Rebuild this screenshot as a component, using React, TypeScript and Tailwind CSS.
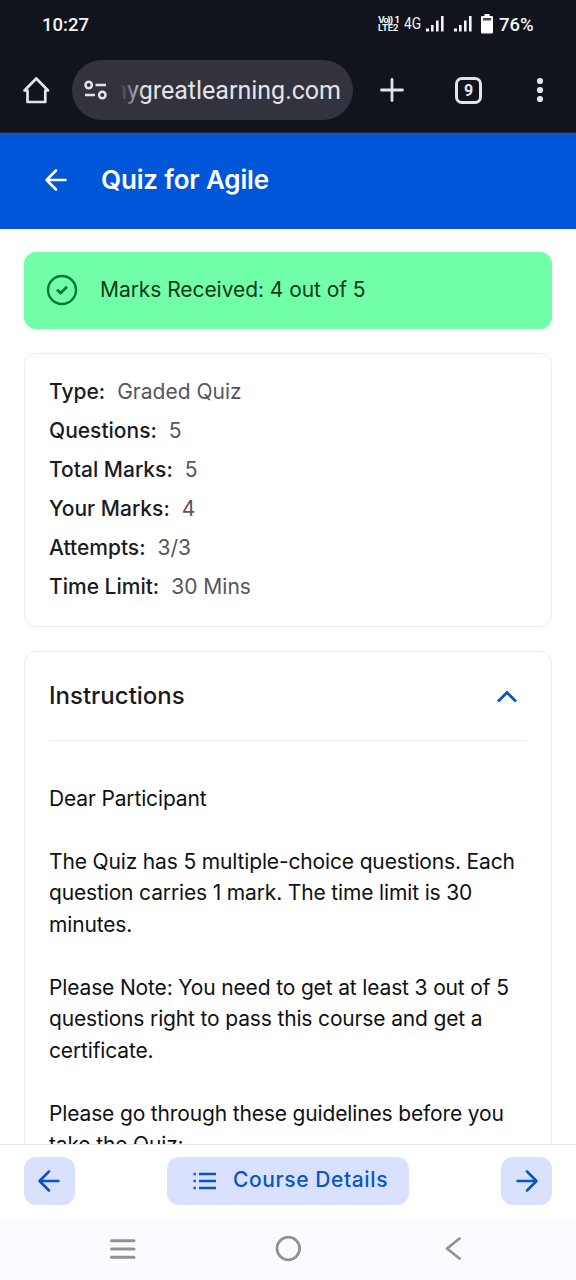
import type { ReactNode } from "react";

const details = [
  { label: "Type:", value: "Graded Quiz" },
  { label: "Questions:", value: "5" },
  { label: "Total Marks:", value: "5" },
  { label: "Your Marks:", value: "4" },
  { label: "Attempts:", value: "3/3" },
  { label: "Time Limit:", value: "30 Mins" },
];

function Signal() {
  return (
    <svg width="18" height="16" viewBox="0 0 18 16" fill="#f4f4f6">
      <rect x="0" y="12.5" width="3" height="3" />
      <rect x="5" y="9" width="2.6" height="6.5" />
      <rect x="10" y="4.5" width="2.6" height="11" />
      <rect x="15" y="0" width="2.6" height="15.5" />
    </svg>
  );
}

function StatusBar() {
  return (
    <div className="flex h-12 items-center pl-[42px] font-[Roboto] font-medium text-[#f4f4f6]">
      <span className="w-[336px] pt-0.5 text-[18.500px] leading-6">10:27</span>
      <div className="w-[26px] font-[Inter] text-[9px] leading-[8.500px] font-bold">
        <div className="flex w-5 justify-between tracking-[-1px]">
          <span>Vo))</span>
          <span>1</span>
        </div>
        <div className="tracking-[-0.3px]">LTE2</div>
      </div>
      <span className="w-[22px] origin-left scale-x-[0.86] text-[16px] leading-6 font-normal">4G</span>
      <Signal />
      <span className="w-[10px]" />
      <Signal />
      <svg className="ml-[9px]" width="12" height="20" viewBox="0 0 12 20">
        <path d="M3.5 0h5v2H11a1 1 0 0 1 1 1v15.5a1 1 0 0 1-1 1H1a1 1 0 0 1-1-1V3a1 1 0 0 1 1-1h2.500z" fill="#fff" />
        <rect x="2" y="4" width="8" height="2.500" fill="#4b4c53" />
      </svg>
      <span className="ml-[6px] pt-0.5 text-[18.500px] leading-6">76%</span>
    </div>
  );
}

function BrowserBar() {
  return (
    <div className="flex h-[85px] items-center border-b border-[#252b3c] pl-[22px] text-[#e4e3e9]">
      <svg width="28" height="28" viewBox="0 0 28 28" fill="none" stroke="currentColor" strokeWidth="2.700" strokeLinejoin="round" strokeLinecap="round">
        <path d="M5.500 14.500H2.500L14.300 2.500 26 14.500H23.300v11.500H5.500z" />
      </svg>
      <div className="ml-[22px] flex h-[60px] w-[281px] items-center overflow-hidden rounded-full bg-[#32333c] pl-3">
        <svg width="24" height="20" viewBox="0 0 24 20" fill="none" stroke="currentColor" strokeWidth="2.500">
          <circle cx="4.700" cy="5" r="3.200" />
          <path d="M11.500 5H22M1 15h10" />
          <circle cx="18.300" cy="15" r="3.200" />
        </svg>
        <div className="relative ml-3 flex w-[221px] justify-end overflow-hidden pt-px font-[Roboto] text-[25px] leading-8 whitespace-nowrap">
          <span>mygreatlearning.com</span>
          <span className="absolute inset-y-0 left-0 w-6 bg-linear-to-r from-[#32333c] to-transparent" />
        </div>
      </div>
      <svg className="ml-[26px]" width="26" height="26" viewBox="0 0 26 26" stroke="currentColor" strokeWidth="2.800" strokeLinecap="round">
        <path d="M13 2.500v21M2.500 13h21" />
      </svg>
      <div className="ml-[50px] flex size-[27px] items-center justify-center rounded-[7px] border-[3px] border-current pt-px font-[Roboto] text-[16px] leading-none font-bold">
        9
      </div>
      <svg className="ml-[53px]" width="10" height="28" viewBox="0 0 10 28" fill="currentColor">
        <circle cx="5" cy="5" r="3.100" />
        <circle cx="5" cy="14" r="3.100" />
        <circle cx="5" cy="23" r="3.100" />
      </svg>
    </div>
  );
}

function Arrow({ right = false }: { right?: boolean }) {
  return (
    <svg width="24" height="24" viewBox="0 0 24 24" fill="none" stroke="currentColor" strokeWidth="2.600" strokeLinecap="round" strokeLinejoin="round">
      {right ? <path d="M2.500 12h19M12 2.500l9.500 9.500-9.500 9.500" /> : <path d="M21.500 12H2.500M12 2.500L2.500 12l9.500 9.500" />}
    </svg>
  );
}

function Card({ className, children }: { className: string; children: ReactNode }) {
  return <section className={"mx-6 rounded-xl border border-[#ededef] px-6 " + className}>{children}</section>;
}

export default function App() {
  return (
    <div className="flex h-[1280px] w-[576px] flex-col overflow-hidden bg-white font-[Inter,sans-serif] text-[21px] text-[#1b1b1f]">
      <div className="shrink-0 bg-[#11141c]">
        <StatusBar />
        <BrowserBar />
      </div>

      <header className="flex h-24 shrink-0 items-center bg-[#0056d8] pb-[2px] pl-[44px] text-white">
        <Arrow />
        <h1 className="ml-[33px] text-[26px] leading-8 font-semibold tracking-[-0.150px]">Quiz for Agile</h1>
      </header>

      <main className="min-h-0 flex-1 overflow-hidden pt-[23px]">
        <div className="mx-6 flex h-[77px] items-center rounded-xl bg-[#71ffa8] pb-[2px] pl-[22px] text-[#0d3b1a]">
          <svg width="32" height="32" viewBox="0 0 32 32" fill="none" stroke="#087735" strokeWidth="2.400">
            <circle cx="16" cy="16" r="14" />
            <path d="m11 15.700 3.700 3.300 6.300-6.200" strokeWidth="2.800" />
          </svg>
          <span className="ml-[22px] tracking-[-0.060px]">Marks Received: 4 out of 5</span>
        </div>

        <Card className="mt-6 h-[274px] pt-[18px]">
          {details.map((d) => (
            <div key={d.label} className="flex h-[39px] items-center gap-3">
              <span className="font-medium">{d.label}</span>
              <span className="text-[#56565b]">{d.value}</span>
            </div>
          ))}
        </Card>

        <Card className="mt-6 h-[600px]">
          <div className="flex h-[89px] items-center justify-between border-b border-[#ededef] pr-2">
            <h2 className="text-[24px] leading-8 font-medium">Instructions</h2>
            <svg width="24" height="24" viewBox="0 0 24 24" fill="none" stroke="#0756c5" strokeWidth="2.800">
              <path d="m3 17.500 9-9 9 9" />
            </svg>
          </div>
          <div className="mt-[41.500px] flex flex-col gap-[31.500px] leading-[31.500px] tracking-[-0.150px] whitespace-nowrap text-[#111113]">
            <p>Dear Participant</p>
            <p>
              The Quiz has 5 multiple-choice questions. Each
              <br />
              question carries 1 mark. The time limit is 30
              <br />
              minutes.
            </p>
            <p>
              Please Note: You need to get at least 3 out of 5
              <br />
              questions right to pass this course and get a
              <br />
              certificate.
            </p>
            <p>
              Please go through these guidelines before you
              <br />
              take the Quiz:
            </p>
          </div>
        </Card>
      </main>

      <footer className="flex h-[74px] shrink-0 items-start justify-between border-t border-[#e6e6e8] px-6 pt-3 text-[#0756c8]">
        <button className="flex h-12 w-[51px] items-center justify-center rounded-xl bg-[#d9e1fe] pr-px pb-px">
          <Arrow />
        </button>
        <button className="flex h-12 w-[242px] items-center rounded-xl bg-[#d9e1fe] pl-[26px]">
          <svg width="24" height="18" viewBox="0 0 24 18" fill="none" stroke="currentColor" strokeWidth="2.300">
            <path d="M6 2h17M6 9h17M6 16h17" />
            <path d="M.5 2h2.300M.5 9h2.300M.5 16h2.300" />
          </svg>
          <span className="ml-4 pb-[2px] font-medium tracking-[0.600px]">Course Details</span>
        </button>
        <button className="flex h-12 w-[51px] items-center justify-center rounded-xl bg-[#d9e1fe] pb-px">
          <Arrow right />
        </button>
      </footer>

      <nav className="flex h-[62px] shrink-0 items-center bg-[#fcfaff] pl-[109px] text-[#929095]">
        <svg width="28" height="24" viewBox="0 0 28 24" stroke="currentColor" strokeWidth="3" strokeLinecap="round">
          <path d="M2.500 3.700h22.500M2.500 12h22.500M2.500 20.300h22.500" />
        </svg>
        <svg className="ml-[137px]" width="28" height="28" viewBox="0 0 28 28" fill="none" stroke="currentColor" strokeWidth="2.700">
          <circle cx="14.300" cy="13.500" r="11.300" />
        </svg>
        <svg className="ml-[142px]" width="20" height="28" viewBox="0 0 20 28" fill="none" stroke="currentColor" strokeWidth="2.700" strokeLinecap="round" strokeLinejoin="round">
          <path d="M15.500 3.500 3 13.500l12.500 10" />
        </svg>
      </nav>
    </div>
  );
}
